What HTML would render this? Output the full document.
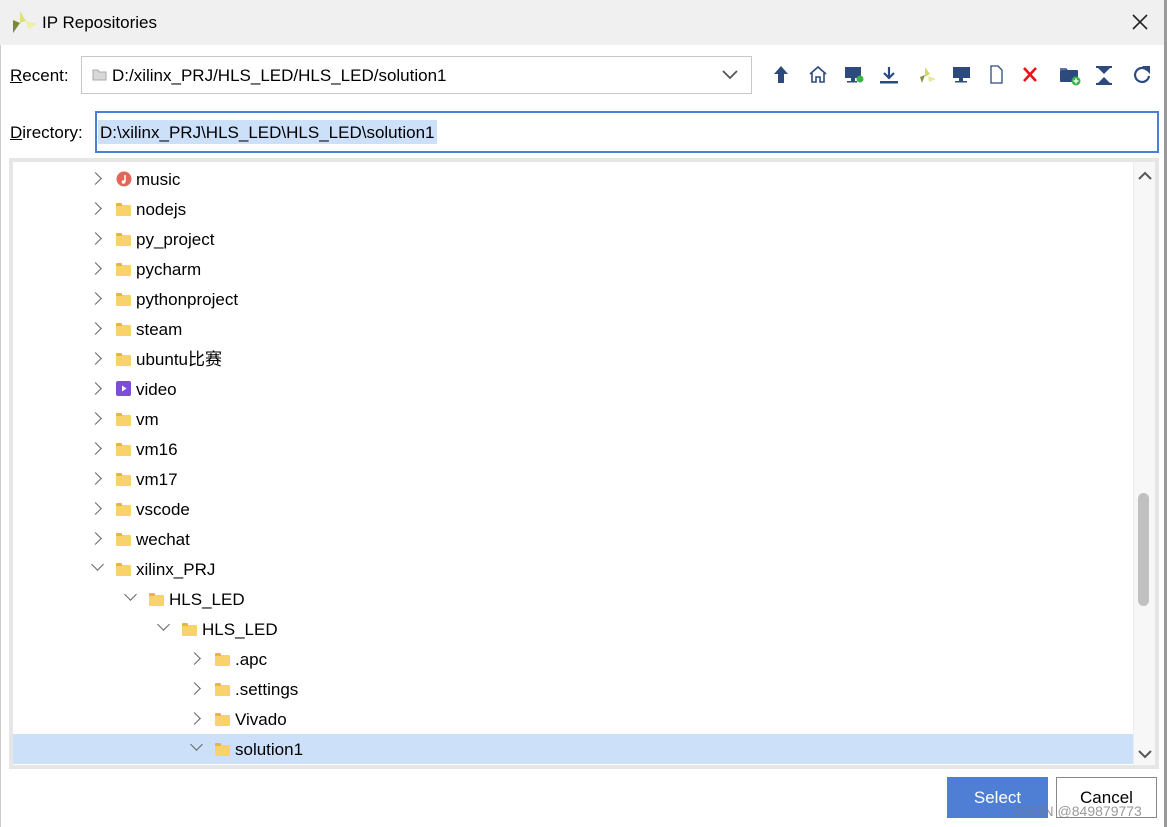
<!DOCTYPE html>
<html><head><meta charset="utf-8"><style>
*{margin:0;padding:0;box-sizing:border-box}
body{width:1167px;height:827px;background:#fff;font-family:"Liberation Sans","Noto Sans CJK SC",sans-serif;font-size:17px;color:#000;position:relative;overflow:hidden}
.title{position:absolute;left:0;top:0;width:1167px;height:45px;background:#f0f0f0}
.abs{position:absolute}
.row{position:absolute;height:30px;line-height:32px;white-space:nowrap}
.chev{position:absolute;top:10px;width:9px;height:9px;border-right:1.6px solid #666;border-bottom:1.6px solid #666}
.fold{position:absolute;top:11px;width:15px;height:11px;background:#f8d26a;border-radius:1px}
.fold:before{content:"";position:absolute;left:0;top:-2px;width:6px;height:3px;background:#e6b640;border-radius:1px 1px 0 0}
.ic{position:absolute;top:5px}
</style></head><body>
<div class="title"></div>
<svg class="abs" style="left:12px;top:11px" width="26" height="22" viewBox="0 0 26 22"><polygon points="1,22 8,12 1,9" fill="#7c8a2e"/><polygon points="8,0 14,10 8,12" fill="#dfe27a"/><polygon points="14,10 25,13 16,18" fill="#eef0a8"/></svg>
<div class="abs" style="left:42px;top:13px;font-size:17px">IP Repositories</div>
<svg class="abs" style="left:1132px;top:14px" width="16" height="16"><path d="M1 1L15 15M15 1L1 15" stroke="#222" stroke-width="1.6"/></svg>
<div class="abs" style="left:0;top:45px;width:1px;height:782px;background:#ccc"></div>
<div class="abs" style="left:1164px;top:0;width:3px;height:827px;background:#9a9a9a"></div>

<div class="abs" style="left:10px;top:66px"><u>R</u>ecent:</div>
<div class="abs" style="left:81px;top:56px;width:671px;height:38px;border:1px solid #c8c8c8;background:#fff"></div>
<svg class="abs" style="left:92px;top:68px" width="15" height="13"><path d="M1 2h5l1 2h7v8H1z" fill="#d8d8d8" stroke="#aaa"/></svg>
<div class="abs" style="left:112px;top:66px">D:/xilinx_PRJ/HLS_LED/HLS_LED/solution1</div>
<svg class="abs" style="left:722px;top:70px" width="16" height="10"><path d="M1 1L8 8L15 1" stroke="#555" stroke-width="1.8" fill="none"/></svg>

<svg class="abs" style="left:770px;top:63px" width="385" height="24">
<g fill="#2c4a7e" stroke="#2c4a7e">
<path d="M11 3L4 11h4v9h6v-9h4z" stroke="none"/>
<path d="M40 11l8-7 8 7M42 10v9h4v-5h4v5h4v-9" fill="none" stroke-width="1.6"/>
<rect x="75" y="4" width="16" height="11" stroke="none"/><rect x="81" y="15" width="4" height="3" stroke="none"/><rect x="77" y="18" width="10" height="1.5" stroke="none"/>
<path d="M119 4v10M114 10l5 5 5-5" fill="none" stroke-width="2.2"/><rect x="110" y="18" width="18" height="2.5" stroke="none"/>
<rect x="183" y="4" width="17" height="11" stroke="none"/><rect x="189" y="15" width="4" height="3" stroke="none"/><rect x="185" y="18" width="12" height="1.5" stroke="none"/>
<path d="M221 3h7l4 4v13h-11z" fill="none" stroke-width="1.3"/>
<rect x="290" y="7" width="18" height="12" rx="1" stroke="none"/><path d="M290 6h6l1 1" stroke-width="1.5" fill="none"/>
<path d="M326 4h16M326 21h16" stroke-width="2"/><path d="M328 5l6 6 6-6zM328 20l6-6 6 6z" stroke="none"/>
<path d="M377 7a7 7 0 1 0 2 6" fill="none" stroke-width="2.2"/><path d="M372 3h8v8z" stroke="none"/>
</g>
<circle cx="90" cy="16" r="3.5" fill="#3bb54a"/>
<polygon points="155,4 160,11 155,14" fill="#d6d96a"/><polygon points="152,20 155,12 150,14" fill="#8a8f3a"/><polygon points="158,13 166,16 159,19" fill="#e6e8a0"/>
<path d="M254 5l12 13M266 5l-12 13" stroke="#e8141a" stroke-width="2.6"/>
<circle cx="306" cy="18" r="4.5" fill="#3bb54a"/><path d="M303.5 18h5M306 15.5v5" stroke="#fff" stroke-width="1.4"/>
</svg>

<div class="abs" style="left:10px;top:123px"><u>D</u>irectory:</div>
<div class="abs" style="left:95px;top:111px;width:1064px;height:42px;border:2px solid #4a7fd4;background:#fff"></div>
<div class="abs" style="left:98px;top:120px;height:24px;line-height:25px;background:#cce0fa;padding:0 2px">D:\xilinx_PRJ\HLS_LED\HLS_LED\solution1</div>

<div class="abs" style="left:9px;top:158px;width:1150px;height:611px;border:4px solid #e6e6e6;background:#fff;overflow:hidden">
<div class="abs" style="left:1120px;top:0;width:22px;height:603px;background:#f7f7f7;border-left:1px solid #ececec"></div>
<svg class="abs" style="left:1124px;top:9px" width="16" height="10"><path d="M2 8L8 2L14 8" stroke="#555" stroke-width="2" fill="none"/></svg>
<svg class="abs" style="left:1124px;top:587px" width="16" height="10"><path d="M2 2L8 8L14 2" stroke="#555" stroke-width="2" fill="none"/></svg>
<div class="abs" style="left:1125px;top:331px;width:11px;height:113px;background:#c0c0c0;border-radius:6px"></div>
<div class="abs" style="left:0;top:572px;width:1120px;height:30px;background:#cce0fa"></div>
</div>

<div id="tree"></div>
<script>
const rows=[["music",0,"m"],["nodejs",0],["py_project",0],["pycharm",0],["pythonproject",0],["steam",0],["ubuntu比赛",0],["video",0,"v"],["vm",0],["vm16",0],["vm17",0],["vscode",0],["wechat",0],["xilinx_PRJ",0,0,1],["HLS_LED",1,0,1],["HLS_LED",2,0,1],[".apc",3],[".settings",3],["Vivado",3],["solution1",3,0,1]];
let h="";rows.forEach((r,i)=>{const y=164+i*30,x=93+r[1]*33;
let c=r[3]?`<div class="chev" style="left:${x}px;top:6px;transform:rotate(45deg)"></div>`:`<div class="chev" style="left:${x-2}px;transform:rotate(-45deg)"></div>`;
let ic=r[2]=="m"?`<svg class="ic" style="left:${x+23}px;top:7px" width="16" height="16"><circle cx="8" cy="8" r="7.5" fill="#e0685a"/><path d="M9 4v7" stroke="#fff" stroke-width="1.5"/><circle cx="7.5" cy="11" r="1.8" fill="#fff"/></svg>`:r[2]=="v"?`<svg class="ic" style="left:${x+23}px;top:7px" width="15" height="15"><rect width="15" height="15" rx="2" fill="#7a4fd6"/><path d="M6 4.5l4.5 3-4.5 3z" fill="#fff"/></svg>`:`<div class="fold" style="left:${x+23}px"></div>`;
h+=`<div class="row" style="left:0;top:${y}px;width:1100px">${c}${ic}<span style="position:absolute;left:${x+43}px">${r[0]}</span></div>`;});
document.getElementById("tree").innerHTML=h;
</script>

<div class="abs" style="left:947px;top:777px;width:101px;height:41px;background:#4f7fd4;color:#fff;text-align:center;line-height:41px;font-size:17px">Select</div>
<div class="abs" style="left:1056px;top:777px;width:101px;height:41px;border:1px solid #888;background:#fff;text-align:center;line-height:39px;font-size:17px">Cancel</div>
<div class="abs" style="left:1014px;top:803px;font-size:14px;color:rgba(120,120,120,0.75)">CSDN @849879773</div>
</body></html>
